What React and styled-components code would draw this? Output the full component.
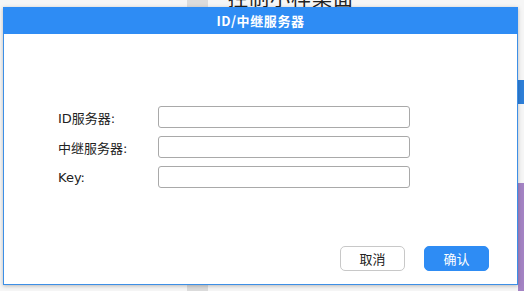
import { Fragment } from "react";
import styled, { createGlobalStyle } from "styled-components";

const GlobalStyle = createGlobalStyle`
  html, body {
    margin: 0;
    padding: 0;
  }
  body {
    width: 524px;
    height: 291px;
    overflow: hidden;
    background: #f4f4f4;
    font-family: "DejaVu Sans", "Noto Sans CJK SC", sans-serif;
  }
`;

const Desktop = styled.div`
  position: relative;
  width: 524px;
  height: 291px;
  overflow: hidden;
  background: #f6f6f6;
`;

// only the bottom sliver of the desktop heading shows above the dialog
const TitleClip = styled.div`
  position: absolute;
  left: 228px;
  top: 0;
  width: 130px;
  height: 7px;
  overflow: hidden;
`;

const DesktopTitle = styled.div`
  margin-top: -14px;
  font-family: "Noto Sans CJK SC", sans-serif;
  font-size: 20px;
  line-height: 24px;
  color: #222;
  letter-spacing: 1px;
  white-space: nowrap;
`;

const Divider = styled.div`
  position: absolute;
  left: 187px;
  top: 0;
  width: 21px;
  height: 291px;
  background: #dcdcdc;
`;

const SideStrip = styled.div`
  position: absolute;
  right: 0;
  top: ${(p) => p.top}px;
  width: 6px;
  height: ${(p) => p.h}px;
  background: ${(p) => p.color};
`;

const Dialog = styled.div`
  position: absolute;
  left: 3px;
  top: 7px;
  width: 515px;
  height: 278px;
  box-sizing: border-box;
  border: 1px solid #3d8fe6;
  background: #fff;
  box-shadow: 0 1px 4px rgba(0, 0, 0, 0.25);
  display: flex;
  flex-direction: column;
`;

const Header = styled.div`
  height: 27px;
  margin: -1px -1px 0;
  background: #2e8cf4;
  color: #fff;
  font-family: "Noto Sans CJK SC", sans-serif;
  font-weight: 700;
  font-size: 13px;
  letter-spacing: 0.6px;
  display: flex;
  align-items: center;
  justify-content: center;
`;

const Form = styled.div`
  margin-top: 72px;
  padding-left: 54px;
  display: grid;
  grid-template-columns: 100px 252px;
  row-gap: 8px;
  align-items: center;
`;

const Label = styled.label`
  font-size: 13px;
  color: #222;
  font-family: "DejaVu Sans", "Noto Sans CJK SC", sans-serif;
`;

const Input = styled.input`
  height: 22px;
  box-sizing: border-box;
  border: 1px solid #a9a9a9;
  border-radius: 3px;
  background: #fff;
  padding: 0 6px;
  outline: none;
`;

const Footer = styled.div`
  margin-top: auto;
  margin-bottom: 13px;
  padding-right: 28px;
  display: flex;
  justify-content: flex-end;
  gap: 19px;
`;

const Button = styled.button`
  width: 65px;
  height: 25px;
  box-sizing: border-box;
  border-radius: 5px;
  font-family: "Noto Sans CJK SC", sans-serif;
  font-size: 13px;
  cursor: pointer;
  border: 1px solid ${(props) => (props.$primary ? "#2e8cf4" : "#c8c8c8")};
  background: ${(props) => (props.$primary ? "#2e8cf4" : "#fff")};
  color: ${(props) => (props.$primary ? "#fff" : "#222")};
`;

const fields = [
  { id: "id-server", label: "ID服务器:" },
  { id: "relay-server", label: "中继服务器:" },
  { id: "key", label: "Key:" },
];

const App = () => {
  return (
    <>
      <GlobalStyle />
      <Desktop>
        <Divider />
        <TitleClip>
          <DesktopTitle>控制小样桌面</DesktopTitle>
        </TitleClip>
        <SideStrip top={80} h={24} color="#2e7fd8" />
        <SideStrip top={183} h={108} color="#a483c4" />
        <Dialog>
          <Header>ID/中继服务器</Header>
          <Form>
            {fields.map((f) => (
              <Fragment key={f.id}>
                <Label htmlFor={f.id}>{f.label}</Label>
                <Input id={f.id} />
              </Fragment>
            ))}
          </Form>
          <Footer>
            <Button>取消</Button>
            <Button $primary>确认</Button>
          </Footer>
        </Dialog>
      </Desktop>
    </>
  );
};

export default App;
